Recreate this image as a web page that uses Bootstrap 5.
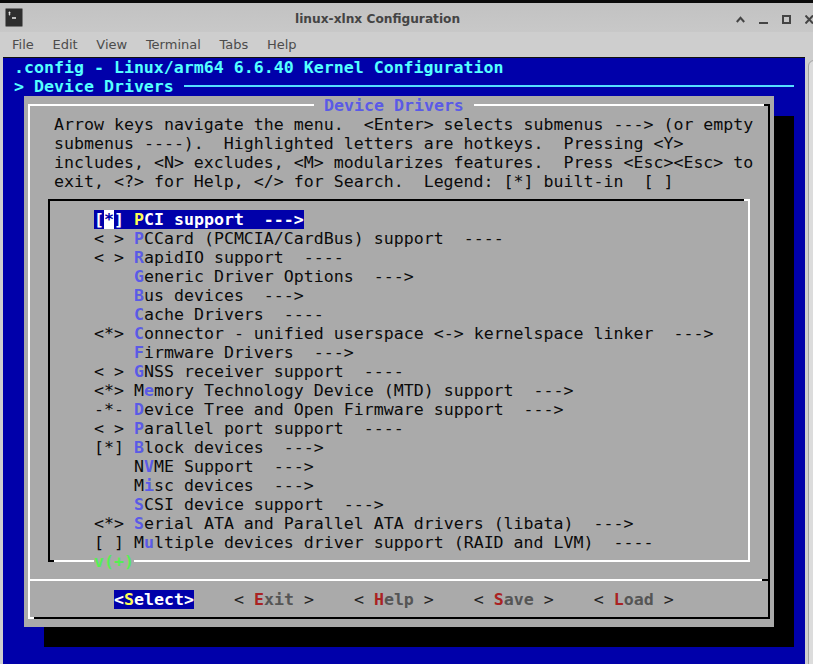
<!DOCTYPE html>
<html lang="en">
<head>
<meta charset="utf-8">
<title>linux-xlnx Configuration</title>
<link href="https://cdn.jsdelivr.net/npm/bootstrap@5.3.0/dist/css/bootstrap.min.css" rel="stylesheet">
<style>
html,body{margin:0;height:664px;overflow:hidden;background:#000}
.win-top{height:3px;background:#0a0a0a}
.win-title{height:29px;background:linear-gradient(#c2c2c2,#c8c8c8);padding-left:5px;font-family:"DejaVu Sans",sans-serif;color:#444}
.win-title .ttl{margin-left:272px;margin-top:3px;font-size:12.2px;font-weight:700;width:165px;white-space:nowrap}
.win-ctrls{margin-left:auto;margin-top:3px;gap:14px;padding-right:0}
.win-menu{height:25px;background:#cecece;padding-left:12px;gap:18.7px;font:13px "DejaVu Sans",sans-serif;color:#4c4c4c}
.win-main{height:607px}
.side-strip{width:3px;background:#cecece}
.term{width:802px;background:#0000aa;border-top:1px solid #111;padding:0 11px;font-family:"DejaVu Sans Mono",monospace;font-size:16.6px;line-height:19px;overflow:hidden}
.scroll-side{width:8px;background:#cecece;position:relative}
.scroll-side i{display:block;position:absolute;left:3px;top:3px;bottom:-10px;width:12px;border:1px solid #a0a0a0;border-radius:6px;background:#dcdcdc}
.tl{height:19px;white-space:pre}
.hdr{color:#55ffff;font-weight:700}
.hdr-rule{height:2px;background:#55ddff;margin-top:8px}
.dlg{width:750px;margin-left:10px;background:#aaa;padding:8px 4px;box-shadow:20px 20px 0 #000;color:#0a0a0a}
.frm{position:relative;border:2px solid;border-color:#fff #000 #000 #fff}
.frm::before,.frm::after,.lbox::before,.lbox::after,.sep::after{content:"";position:absolute;width:6px;height:2px}
.frm::before{top:-2px;right:-2px;background:#000}
.frm::after{bottom:-2px;left:-2px;background:#fff}
.dlg-title{position:absolute;left:284px;top:-10px;background:#aaa;color:#5a5ae6;font-weight:700;padding:0 10px;white-space:pre}
.help-txt{padding:9px 0 0 24px}
.lbox{position:relative;width:702px;margin:8px 0 0 18px;border:2px solid;border-color:#000 #fff #fff #000;padding:9px 0 8px 44px}
.lbox::before{top:-2px;right:-2px;background:#fff}
.lbox::after{bottom:-2px;left:-2px;background:#000}
.more{position:absolute;left:44px;bottom:-11px;background:#aaa;color:#55ee55;font-weight:700}
.sep{position:relative;height:2px;background:#fff;margin-top:17px}
.sep::after{top:0;right:0;background:#000}
.btns{padding:9px 0 8px 84px;gap:40px;white-space:pre}
.hk{color:#5a5ae6;font-weight:700}
.sel{display:inline-block;background:#0000aa;color:#fff;font-weight:700}
.sel .y{color:#ffff55}
.sel .cur{background:#fff;color:#0000aa}
.mbtn{color:#222}
.mbtn b{color:#555}
.mbtn b.r{color:#aa2222}
</style>
</head>
<body>
<div class="win-top"></div>
<div class="win-title d-flex align-items-center">
  <svg width="18" height="19" viewBox="0 0 18 19"><rect x=".5" y=".5" width="17" height="18" rx="1" fill="#2e2e2e" stroke="#777"/><path d="M3.5 4.5h2M3.5 6h2M4.5 3.5v4" stroke="#eee" stroke-width=".8" fill="none"/><path d="M7 10h4" stroke="#eee" stroke-width="1.5"/></svg>
  <div class="ttl">linux-xlnx Configuration</div>
  <div class="win-ctrls d-flex align-items-center">
    <svg width="9" height="9" viewBox="0 0 9 9"><path d="M.8 7L4.5 2.8 8.2 7" fill="none" stroke="#444" stroke-width="2"/></svg>
    <svg width="9" height="9" viewBox="0 0 9 9"><path d="M0 8h9" stroke="#444" stroke-width="2"/></svg>
    <svg width="9" height="9" viewBox="0 0 9 9"><rect x="1" y="1" width="7" height="7" fill="none" stroke="#444" stroke-width="2"/></svg>
    <svg width="8" height="9" viewBox="0 0 8 9"><path d="M.5 .5L8 8.5M8 .5L.5 8.5" stroke="#444" stroke-width="2"/></svg>
  </div>
</div>
<div class="win-menu d-flex align-items-center"><span>File</span><span>Edit</span><span>View</span><span>Terminal</span><span>Tabs</span><span>Help</span></div>
<div class="win-main d-flex">
  <div class="side-strip"></div>
  <div class="term">
    <div class="tl hdr">.config - Linux/arm64 6.6.40 Kernel Configuration</div>
    <div class="tl hdr d-flex"><span>&gt; Device Drivers </span><div class="hdr-rule flex-grow-1"></div></div>
    <div class="dlg">
      <div class="frm">
        <div class="dlg-title">Device Drivers</div>
        <div class="help-txt">
          <div class="tl">Arrow keys navigate the menu.  &lt;Enter&gt; selects submenus ---&gt; (or empty</div>
          <div class="tl">submenus ----).  Highlighted letters are hotkeys.  Pressing &lt;Y&gt;</div>
          <div class="tl">includes, &lt;N&gt; excludes, &lt;M&gt; modularizes features.  Press &lt;Esc&gt;&lt;Esc&gt; to</div>
          <div class="tl">exit, &lt;?&gt; for Help, &lt;/&gt; for Search.  Legend: [*] built-in  [ ]</div>
        </div>
        <div class="lbox">
          <ul class="list-unstyled mb-0">
            <li class="tl"><span class="sel">[<span class="cur">*</span>] <span class="y">P</span>CI support  ---&gt;</span></li>
            <li class="tl">&lt; &gt; <span class="hk">P</span>CCard (PCMCIA/CardBus) support  ----</li>
            <li class="tl">&lt; &gt; <span class="hk">R</span>apidIO support  ----</li>
            <li class="tl">    <span class="hk">G</span>eneric Driver Options  ---&gt;</li>
            <li class="tl">    <span class="hk">B</span>us devices  ---&gt;</li>
            <li class="tl">    <span class="hk">C</span>ache Drivers  ----</li>
            <li class="tl">&lt;*&gt; <span class="hk">C</span>onnector - unified userspace &lt;-&gt; kernelspace linker  ---&gt;</li>
            <li class="tl">    <span class="hk">F</span>irmware Drivers  ---&gt;</li>
            <li class="tl">&lt; &gt; <span class="hk">G</span>NSS receiver support  ----</li>
            <li class="tl">&lt;*&gt; M<span class="hk">e</span>mory Technology Device (MTD) support  ---&gt;</li>
            <li class="tl">-*- <span class="hk">D</span>evice Tree and Open Firmware support  ---&gt;</li>
            <li class="tl">&lt; &gt; <span class="hk">P</span>arallel port support  ----</li>
            <li class="tl">[*] <span class="hk">B</span>lock devices  ---&gt;</li>
            <li class="tl">    N<span class="hk">V</span>ME Support  ---&gt;</li>
            <li class="tl">    M<span class="hk">i</span>sc devices  ---&gt;</li>
            <li class="tl">    <span class="hk">S</span>CSI device support  ---&gt;</li>
            <li class="tl">&lt;*&gt; <span class="hk">S</span>erial ATA and Parallel ATA drivers (libata)  ---&gt;</li>
            <li class="tl">[ ] M<span class="hk">u</span>ltiple devices driver support (RAID and LVM)  ----</li>
          </ul>
          <div class="more">v(+)</div>
        </div>
        <div class="sep"></div>
        <div class="btns d-flex">
          <span class="sel">&lt;<span class="y">S</span>elect&gt;</span>
          <span class="mbtn">&lt; <b class="r">E</b><b>xit</b> &gt;</span>
          <span class="mbtn">&lt; <b class="r">H</b><b>elp</b> &gt;</span>
          <span class="mbtn">&lt; <b class="r">S</b><b>ave</b> &gt;</span>
          <span class="mbtn">&lt; <b class="r">L</b><b>oad</b> &gt;</span>
        </div>
      </div>
    </div>
  </div>
  <div class="scroll-side"><i></i></div>
</div>
<script src="https://cdn.jsdelivr.net/npm/bootstrap@5.3.0/dist/js/bootstrap.bundle.min.js"></script>
</body>
</html>
